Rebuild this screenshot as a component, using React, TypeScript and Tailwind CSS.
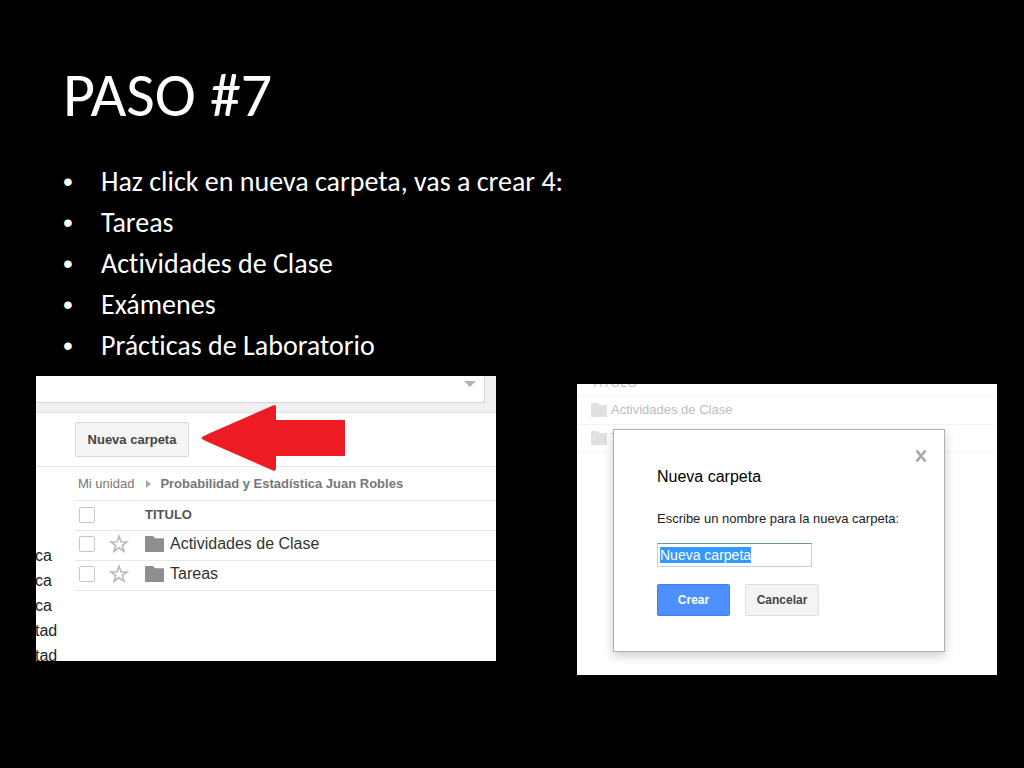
import React, { useEffect, useRef, useState } from 'react'

const steps = [
    'Haz click en nueva carpeta, vas a crear 4:',
    'Tareas',
    'Actividades de Clase',
    'Exámenes',
    'Prácticas de Laboratorio',
]

const folders = ['Actividades de Clase', 'Tareas']
const sidebarItems = ['ca', 'ca', 'ca', 'tad', 'tad']

const checkboxStyle =
    'block size-4 appearance-none rounded-xs border border-[#c6c6c6] bg-white checked:bg-[#4d90fe]'

const FolderIcon: React.FC<{ className: string }> = ({ className }) => (
    <svg viewBox="0 0 20 16" preserveAspectRatio="none" className={className} fill="currentColor" aria-hidden="true">
        <path d="M.5 0h8l2 2.200h9a.5.5 0 0 1 .5.5V15.500a.5.5 0 0 1-.5.5H.5a.5.5 0 0 1-.5-.5V.5A.5.5 0 0 1 .5 0z" />
    </svg>
)

const StarIcon = () => (
    <svg viewBox="0 0 20 20" className="size-5" fill="none" stroke="#b9b9b9" strokeWidth="1.6" aria-hidden="true">
        <path d="M10 2.2l2 5.6 6 .1-4.8 3.6 1.8 5.8-5-3.5-5 3.5 1.8-5.8L2 7.9l6-.1z" />
    </svg>
)

const DrivePanel = () => {
    return (
        <section className="relative h-[285px] overflow-hidden bg-white">
            {/* search bar */}
            <div className="h-[37px] border-b border-[#e0e0e0] bg-[#f0f0f0] pr-[11px]">
                <div className="flex h-[27px] justify-end border-r border-b border-[#d4d4d4] bg-white pr-2">
                    <button type="button" aria-label="Opciones de búsqueda" className="h-4">
                        <svg viewBox="0 0 12 6" className="h-[6px] w-3" fill="#b4b4b4">
                            <path d="M0 0h12L6 6z" />
                        </svg>
                    </button>
                </div>
            </div>
            <div className="flex h-[54px] items-center border-b border-[#e8e8e8] pl-[39px]">
                <button
                    type="button"
                    className="h-[35px] w-[114px] rounded-xs border border-[#d8d8d8] bg-[#f4f4f4] text-[13px] font-bold whitespace-nowrap text-[#444]"
                >
                    Nueva carpeta
                </button>
            </div>
            <div className="flex">
                <ul className="-ml-px w-10 shrink-0 pt-[76px] text-base leading-[25px] text-[#222]">
                    {sidebarItems.map((item, i) => (
                        <li key={i}>{item}</li>
                    ))}
                </ul>
                <div className="min-w-0 flex-1">
                    <nav className="flex h-[33px] items-center pl-[3px] text-[13px] whitespace-nowrap text-[#777]">
                        <a href="#unidad">Mi unidad</a>
                        <svg viewBox="0 0 5 8" className="mr-[9px] ml-3 h-2 w-[5px]" fill="#a8a8a8">
                            <path d="M0 0l5 4-5 4z" />
                        </svg>
                        <a href="#probabilidad" className="font-bold">Probabilidad y Estadística Juan Robles</a>
                    </nav>
                    <table className="w-full border-collapse border-y border-[#e8e8e8]">
                        <thead>
                            <tr className="h-[30px] border-b border-[#e8e8e8]">
                                <th className="w-[34px] pb-[2px] pl-1">
                                    <input type="checkbox" aria-label="Seleccionar todo" className={checkboxStyle} />
                                </th>
                                <th className="w-9"></th>
                                <th className="pb-[2px] text-left text-[13px] font-bold text-[#555]">TITULO</th>
                            </tr>
                        </thead>
                        <tbody>
                            {folders.map((name) => (
                                <tr key={name} className="h-[30px] border-b border-[#e8e8e8]">
                                    <td className="pb-[3px] pl-1">
                                        <input type="checkbox" aria-label={name} className={checkboxStyle} />
                                    </td>
                                    <td className="pb-[3px]">
                                        <button type="button" aria-label={`Destacar ${name}`} className="block">
                                            <StarIcon />
                                        </button>
                                    </td>
                                    <td className="pb-[4px]">
                                        <div className="flex items-center gap-[6px] text-base leading-6 text-[#333]">
                                            <FolderIcon className="h-4 w-[19px] text-[#8e8e8e]" />
                                            {name}
                                        </div>
                                    </td>
                                </tr>
                            ))}
                        </tbody>
                    </table>
                </div>
            </div>
            {/* red arrow pointing to the button */}
            <svg viewBox="0 0 144 66" className="absolute top-[29px] left-[165px] h-[66px] w-36" fill="#ed1c24">
                <path d="M1 32Q0 33 1 34L8 37.500 72 65.500Q75 66.500 75 64V51H143Q144.500 51 144.500 50V16Q144.500 15 143 15H75V1.500Q75-.5 72 .5L8 28.500z" />
            </svg>
        </section>
    )
}

const NewFolderPanel = () => {
    const [name, setName] = useState('Nueva carpeta')
    const inputRef = useRef<HTMLInputElement>(null)

    useEffect(() => {
        inputRef.current?.focus()
        inputRef.current?.select()
    }, [])

    return (
        <section className="relative mt-2 h-[291px] overflow-hidden bg-white text-[13px]">
            <div className="flex h-[13px] items-end border-b border-[#f4f4f4] pl-[14px] text-[#c4c4c4]">
                <span className="pb-[5px] leading-4">TITULO</span>
            </div>
            {folders.map((folder) => (
                <div
                    key={folder}
                    className="flex h-7 items-center gap-1 border-b border-[#f4f4f4] pb-[2px] pl-[14px] text-[#bdbdbd]"
                >
                    <FolderIcon className="h-[14px] w-4 text-[#e0e0e0]" />
                    {folder}
                </div>
            ))}
            <div
                role="dialog"
                aria-labelledby="dialog-title"
                className="absolute top-[45px] right-[52px] left-9 h-[223px] border border-[#b0b0b0] bg-white px-[43px] pt-[35px] text-[#222] shadow-[0_4px_10px_rgba(0,0,0,0.2)]"
            >
                <button type="button" aria-label="Cerrar" className="absolute top-[19px] right-[17px]">
                    <svg viewBox="0 0 12 14" className="h-[14px] w-3" stroke="#a8a8a8" strokeWidth="2.6">
                        <path d="M1.500 1.500l9 11M10.500 1.500l-9 11" />
                    </svg>
                </button>
                <h2 id="dialog-title" className="text-base leading-6 text-black">Nueva carpeta</h2>
                <label htmlFor="folder-name" className="mt-5 block leading-5 whitespace-nowrap">
                    Escribe un nombre para la nueva carpeta:
                </label>
                <input
                    id="folder-name"
                    ref={inputRef}
                    type="text"
                    value={name}
                    onChange={(event) => setName(event.target.value)}
                    className="mt-[14px] block h-6 w-[155px] border border-[#bcd3e3] border-t-[#6d93ad] px-[2px] text-sm outline-none selection:bg-[#3399ff] selection:text-white"
                />
                <div className="mt-[17px] flex gap-[15px] text-xs font-bold">
                    <button type="button" className="h-8 w-[73px] rounded-xs border border-[#3f7fee] bg-[#4d90fe] text-white">
                        Crear
                    </button>
                    <button type="button" className="h-8 w-[74px] rounded-xs border border-[#dedede] bg-[#f4f4f4] text-[#444]">
                        Cancelar
                    </button>
                </div>
            </div>
        </section>
    )
}

const App = () => {
    return (
        <main className="min-h-screen bg-black pt-[59px] text-white">
            <div className="px-[63px] font-['Carlito','Lato',sans-serif] [font-variant-ligatures:none]">
                <h1 className="text-[62px] leading-[72px]">PASO #7</h1>
                <ul className="mt-[30px] text-[28px] leading-[41px]">
                    {steps.map((step) => (
                        <li key={step} className="flex items-center gap-7">
                            <span className="w-[10px] text-center font-['Liberation_Sans',Arial,sans-serif]">•</span>
                            {step}
                        </li>
                    ))}
                </ul>
            </div>
            <div className="mt-[10px] grid grid-cols-[460fr_420fr] items-start gap-x-[81px] pr-[27px] pl-9 font-['Liberation_Sans',Arial,sans-serif]">
                <DrivePanel />
                <NewFolderPanel />
            </div>
        </main>
    )
}

export default App
